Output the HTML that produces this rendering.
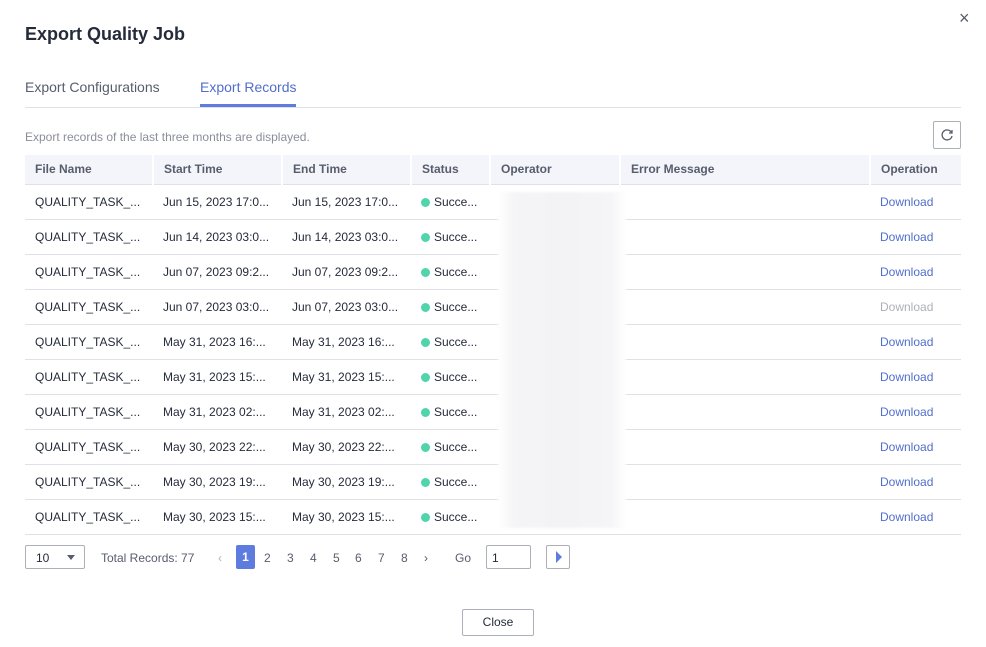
<!DOCTYPE html><html><head><meta charset="utf-8"><style>
*{box-sizing:border-box;margin:0;padding:0}
body{width:986px;height:647px;background:#fff;font-family:"Liberation Sans",Arial,sans-serif;color:#252b3a;position:relative;overflow:hidden;font-size:12px}
.abs{position:absolute}
table{position:absolute;left:25px;top:155px;width:936px;border-collapse:collapse;table-layout:fixed}
th{background:#f3f5fb;height:29px;text-align:left;font-weight:bold;color:#575d6c;padding-left:10px;font-size:12px;border-left:2px solid #fff;border-bottom:1px solid #dfe1e6}
th:first-child{border-left:none}
td{height:35px;padding-left:10px;border-bottom:1px solid #dfe1e6;white-space:nowrap;overflow:hidden;font-size:12px;color:#252b3a}
.dot{display:inline-block;width:9px;height:9px;border-radius:50%;background:#50d4ab;margin-right:4px;vertical-align:-1px}
a{color:#526ecc;text-decoration:none}
.pg span{position:absolute;top:551px;font-size:12px;color:#575d6c}
</style></head><body>
<div class="abs" style="left:25px;top:24px;font-size:18px;font-weight:bold;color:#252b3a">Export Quality Job</div>
<div class="abs" style="left:959px;top:8px;font-size:18px;color:#575d6c">×</div>
<div class="abs" style="left:25px;top:79px;font-size:14px;color:#575d6c">Export Configurations</div>
<div class="abs" style="left:200px;top:79px;font-size:14px;color:#526ecc">Export Records</div>
<div class="abs" style="left:200px;top:104px;width:96px;height:3px;background:#5e7ce0"></div>
<div class="abs" style="left:25px;top:107px;width:936px;height:1px;background:#dfe1e6"></div>
<div class="abs" style="left:25px;top:130px;font-size:12px;color:#8a8e99">Export records of the last three months are displayed.</div>
<div class="abs" style="left:933px;top:121px;width:28px;height:28px;border:1px solid #adb0b8;border-radius:2px"><svg width="26" height="26" viewBox="0 0 26 26"><path d="M17.5 10.5A5 5 0 1 0 18 14" fill="none" stroke="#575d6c" stroke-width="1.3"/><path d="M18 8v3h-3" fill="none" stroke="#575d6c" stroke-width="1.3"/></svg></div>
<table>
<colgroup><col style="width:128px"><col style="width:129px"><col style="width:129px"><col style="width:79px"><col style="width:130px"><col style="width:250px"><col style="width:91px"></colgroup>
<tr><th>File Name</th><th>Start Time</th><th>End Time</th><th>Status</th><th>Operator</th><th>Error Message</th><th>Operation</th></tr>
<tr><td>QUALITY_TASK_...</td><td>Jun 15, 2023 17:0...</td><td>Jun 15, 2023 17:0...</td><td><span class="dot"></span>Succe...</td><td></td><td></td><td><a>Download</a></td></tr>
<tr><td>QUALITY_TASK_...</td><td>Jun 14, 2023 03:0...</td><td>Jun 14, 2023 03:0...</td><td><span class="dot"></span>Succe...</td><td></td><td></td><td><a>Download</a></td></tr>
<tr><td>QUALITY_TASK_...</td><td>Jun 07, 2023 09:2...</td><td>Jun 07, 2023 09:2...</td><td><span class="dot"></span>Succe...</td><td></td><td></td><td><a>Download</a></td></tr>
<tr><td>QUALITY_TASK_...</td><td>Jun 07, 2023 03:0...</td><td>Jun 07, 2023 03:0...</td><td><span class="dot"></span>Succe...</td><td></td><td></td><td><a style="color:#adb0b8">Download</a></td></tr>
<tr><td>QUALITY_TASK_...</td><td>May 31, 2023 16:...</td><td>May 31, 2023 16:...</td><td><span class="dot"></span>Succe...</td><td></td><td></td><td><a>Download</a></td></tr>
<tr><td>QUALITY_TASK_...</td><td>May 31, 2023 15:...</td><td>May 31, 2023 15:...</td><td><span class="dot"></span>Succe...</td><td></td><td></td><td><a>Download</a></td></tr>
<tr><td>QUALITY_TASK_...</td><td>May 31, 2023 02:...</td><td>May 31, 2023 02:...</td><td><span class="dot"></span>Succe...</td><td></td><td></td><td><a>Download</a></td></tr>
<tr><td>QUALITY_TASK_...</td><td>May 30, 2023 22:...</td><td>May 30, 2023 22:...</td><td><span class="dot"></span>Succe...</td><td></td><td></td><td><a>Download</a></td></tr>
<tr><td>QUALITY_TASK_...</td><td>May 30, 2023 19:...</td><td>May 30, 2023 19:...</td><td><span class="dot"></span>Succe...</td><td></td><td></td><td><a>Download</a></td></tr>
<tr><td>QUALITY_TASK_...</td><td>May 30, 2023 15:...</td><td>May 30, 2023 15:...</td><td><span class="dot"></span>Succe...</td><td></td><td></td><td><a>Download</a></td></tr>
</table>
<div class="abs" style="left:498px;top:192px;width:128px;height:336px;background:linear-gradient(90deg,#fff,#f5f5f7 12%,#f3f3f5 50%,#f5f5f7 88%,#fff);filter:blur(1px)"></div>
<div class="pg">
<div class="abs" style="left:25px;top:545px;width:60px;height:24px;border:1px solid #adb0b8;border-radius:2px"></div>
<span style="left:36px;color:#252b3a">10</span>
<div class="abs" style="left:67px;top:555px;border:4px solid transparent;border-top:5px solid #575d6c"></div>
<span style="left:101px">Total Records: 77</span>
<span style="left:218px;color:#adb0b8">‹</span>
<div class="abs" style="left:236px;top:545px;width:19px;height:24px;background:#5e7ce0;border-radius:2px;color:#fff;font-weight:bold;text-align:center;line-height:24px">1</div>
<span style="left:264px">2</span><span style="left:287px">3</span><span style="left:310px">4</span><span style="left:333px">5</span><span style="left:355px">6</span><span style="left:378px">7</span><span style="left:401px">8</span>
<span style="left:424px">›</span>
<span style="left:455px">Go</span>
<div class="abs" style="left:486px;top:545px;width:45px;height:24px;border:1px solid #adb0b8;border-radius:2px"></div>
<span style="left:492px;color:#252b3a">1</span>
<div class="abs" style="left:546px;top:545px;width:24px;height:24px;border:1px solid #adb0b8;border-radius:2px"></div>
<div class="abs" style="left:556px;top:551px;border:6px solid transparent;border-left:6px solid #5e7ce0;border-right:none"></div>
</div>
<div class="abs" style="left:462px;top:609px;width:72px;height:27px;border:1px solid #adb0b8;border-radius:2px;text-align:center;line-height:25px;font-size:12px">Close</div>
</body></html>
